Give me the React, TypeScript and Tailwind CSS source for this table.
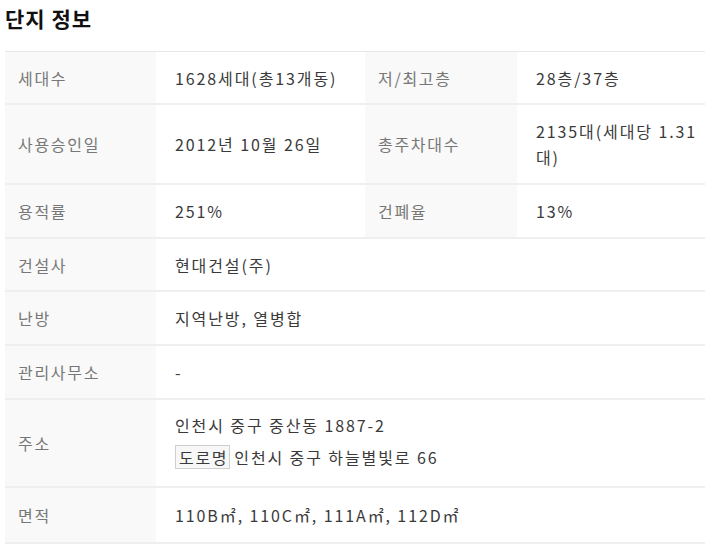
import React from "react";

const font = { fontFamily: '"Noto Sans CJK KR", "Noto Sans", sans-serif' };

type Row = { cells: [string, React.ReactNode][]; h: string; top?: boolean };

const Label = ({ children }: { children: React.ReactNode }) => (
  <div className="flex items-center bg-[#f9f9f9] pl-[13px] tracking-[1.7px] text-[#777]">{children}</div>
);
const Value = ({ children, span, top }: { children: React.ReactNode; span?: boolean; top?: boolean }) => (
  <div
    className={
      "flex pl-[19px] pr-[4px] tracking-[1.9px] text-[#3a3a3a] " +
      (span ? "col-span-3 " : "") +
      (top ? "items-start pt-[12px]" : "items-center")
    }
  >
    {children}
  </div>
);

export default function App() {
  const rows: Row[] = [
    { cells: [["세대수", "1628세대(총13개동)"], ["저/최고층", "28층/37층"]], h: "h-[53px]" },
    {
      cells: [
        ["사용승인일", "2012년 10월 26일"],
        ["총주차대수", <span className="leading-[26px]">2135대(세대당 1.31 대)</span>],
      ],
      h: "h-[80px]",
    },
    { cells: [["용적률", "251%"], ["건폐율", "13%"]], h: "h-[54px]" },
    { cells: [["건설사", "현대건설(주)"]], h: "h-[53px]" },
    { cells: [["난방", "지역난방, 열병합"]], h: "h-[54px]" },
    { cells: [["관리사무소", "-"]], h: "h-[54px]" },
    {
      cells: [
        [
          "주소",
          <div className="flex flex-col">
            <div className="leading-[26px]">인천시 중구 중산동 1887-2</div>
            <div className="mt-[6px] flex items-center leading-[26px]">
              <span className="mr-[4px] inline-flex h-[24px] items-center border border-[#cfcfcf] bg-[#f7f7f7] pl-[3px] pr-[1px] tracking-[1.7px]">
                도로명
              </span>
              인천시 중구 하늘별빛로 66
            </div>
          </div>,
        ],
      ],
      h: "h-[88px]",
      top: true,
    },
    { cells: [["면적", "110B㎡, 110C㎡, 111A㎡, 112D㎡"]], h: "h-[56px]" },
  ];

  return (
    <div className="min-h-[554px] w-[705px] bg-white pl-[5px] text-[16px]" style={font}>
      <h2 className="pt-[4px] text-[21px] font-bold leading-[28px] tracking-[1px] text-[#111]">단지 정보</h2>
      <div className="mt-[19px] border-t border-[#e6e6e6]">
        {rows.map((r, i) => (
          <div
            key={i}
            className={"grid grid-cols-[151px_209px_152px_1fr] border-b-2 border-[#efefef] " + r.h}
          >
            {r.cells.map(([l, v], j) => (
              <React.Fragment key={j}>
                <Label>{l}</Label>
                <Value span={r.cells.length === 1} top={r.top}>
                  {v}
                </Value>
              </React.Fragment>
            ))}
          </div>
        ))}
      </div>
    </div>
  );
}
